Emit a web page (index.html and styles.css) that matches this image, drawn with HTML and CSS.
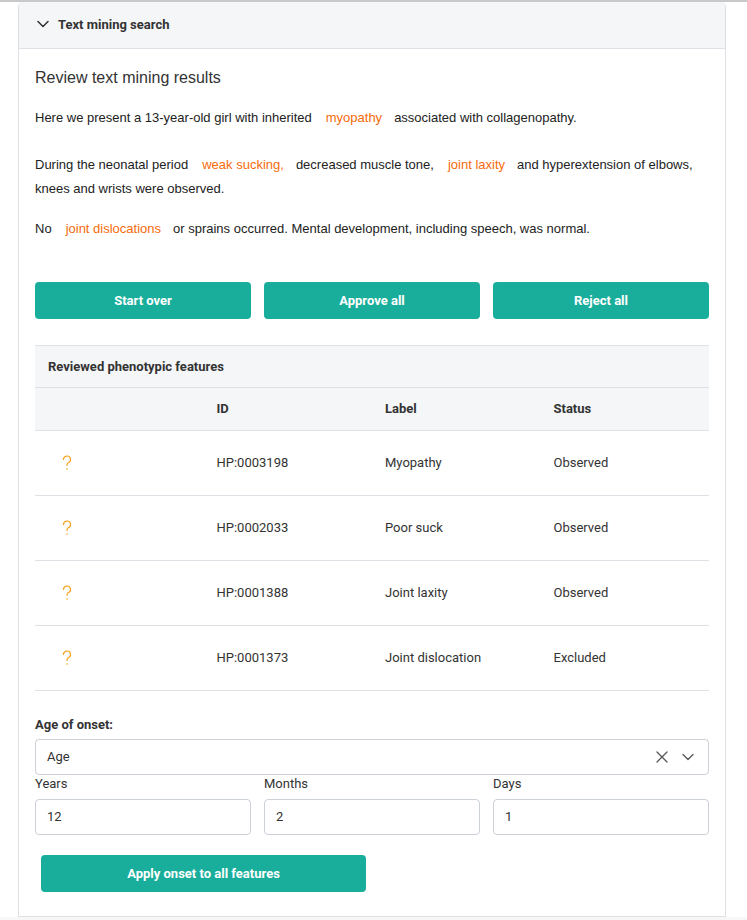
FILE: index.html
```html
<!DOCTYPE html>
<html lang="en">
<head>
<meta charset="utf-8">
<title>Text mining search</title>
<link rel="stylesheet" href="styles.css">
</head>
<body>
<div class="page">
  <section class="card">
    <header class="card-header">
      <svg class="chev" width="12" height="8" viewBox="0 0 12 8"><path d="M1 1.5 L6 6.5 L11 1.5" fill="none" stroke="#333" stroke-width="1.5" stroke-linecap="round" stroke-linejoin="round"/></svg>
      <span class="card-title">Text mining search</span>
    </header>
    <div class="card-body">
      <h2 class="review-title">Review text mining results</h2>
      <p class="mined mined-first"><span>Here we present a 13-year-old girl with inherited</span><span class="hit">myopathy</span><span>associated with collagenopathy.</span></p>
      <p class="mined"><span>During the neonatal period</span><span class="hit">weak sucking,</span><span>decreased muscle tone,</span><span class="hit">joint laxity</span><span>and hyperextension of elbows,</span> <span>knees and wrists were observed.</span></p>
      <p class="mined mined-last"><span>No</span><span class="hit">joint dislocations</span><span>or sprains occurred. Mental development, including speech, was normal.</span></p>

      <div class="actions">
        <button class="btn">Start over</button>
        <button class="btn">Approve all</button>
        <button class="btn">Reject all</button>
      </div>

      <div class="table-wrap">
        <div class="table-caption">Reviewed phenotypic features</div>
        <table class="features">
          <thead>
            <tr><th></th><th>ID</th><th>Label</th><th>Status</th></tr>
          </thead>
          <tbody>
            <tr><td class="q"><svg width="10" height="16" viewBox="0 0 10 16"><path d="M1.5 4.5 A3.5 3.5 0 1 1 6.2 7.8 C5.2 8.4 5 9 5 10.5" fill="none" stroke="#f5a21c" stroke-width="1.2" stroke-linecap="round"/><circle cx="5" cy="14" r="0.8" fill="#f5a21c"/></svg></td><td>HP:0003198</td><td>Myopathy</td><td>Observed</td></tr>
            <tr><td class="q"><svg width="10" height="16" viewBox="0 0 10 16"><path d="M1.5 4.5 A3.5 3.5 0 1 1 6.2 7.8 C5.2 8.4 5 9 5 10.5" fill="none" stroke="#f5a21c" stroke-width="1.2" stroke-linecap="round"/><circle cx="5" cy="14" r="0.8" fill="#f5a21c"/></svg></td><td>HP:0002033</td><td>Poor suck</td><td>Observed</td></tr>
            <tr><td class="q"><svg width="10" height="16" viewBox="0 0 10 16"><path d="M1.5 4.5 A3.5 3.5 0 1 1 6.2 7.8 C5.2 8.4 5 9 5 10.5" fill="none" stroke="#f5a21c" stroke-width="1.2" stroke-linecap="round"/><circle cx="5" cy="14" r="0.8" fill="#f5a21c"/></svg></td><td>HP:0001388</td><td>Joint laxity</td><td>Observed</td></tr>
            <tr><td class="q"><svg width="10" height="16" viewBox="0 0 10 16"><path d="M1.5 4.5 A3.5 3.5 0 1 1 6.2 7.8 C5.2 8.4 5 9 5 10.5" fill="none" stroke="#f5a21c" stroke-width="1.2" stroke-linecap="round"/><circle cx="5" cy="14" r="0.8" fill="#f5a21c"/></svg></td><td>HP:0001373</td><td>Joint dislocation</td><td>Excluded</td></tr>
          </tbody>
        </table>
      </div>

      <div class="onset">
        <div class="onset-label">Age of onset:</div>
        <div class="select">
          <span class="select-value">Age</span>
          <span class="select-icons">
            <svg width="12" height="12" viewBox="0 0 12 12"><path d="M1 1 L11 11 M11 1 L1 11" stroke="#555" stroke-width="1.3" stroke-linecap="round"/></svg>
            <svg width="12" height="8" viewBox="0 0 12 8"><path d="M1 1.5 L6 6.5 L11 1.5" fill="none" stroke="#555" stroke-width="1.3" stroke-linecap="round" stroke-linejoin="round"/></svg>
          </span>
        </div>
        <div class="fields">
          <label class="field"><span class="field-label">Years</span><span class="input">12</span></label>
          <label class="field"><span class="field-label">Months</span><span class="input">2</span></label>
          <label class="field"><span class="field-label">Days</span><span class="input">1</span></label>
        </div>
        <button class="btn btn-apply">Apply onset to all features</button>
      </div>
    </div>
  </section>
  <div class="footer-strip"></div>
</div>
</body>
</html>
```

FILE: styles.css
```css
* { box-sizing: border-box; }
html, body { margin: 0; padding: 0; background: #fff; }
body {
  font-family: Roboto, "Liberation Sans", sans-serif;
  color: #333;
  font-size: 13px;
}
.page {
  border-top: 2px solid #c9c9c9;
  height: 920px;
  overflow: hidden;
}
.card {
  width: 708px;
  margin-left: 18px;
  border: 1px solid #dde1e6;
  border-top: none;
  border-radius: 5px 5px 0 0;
  background: #fff;
  height: 915px;
}
.card-header {
  height: 47px;
  background: #f5f6f7;
  border-bottom: 1px solid #dde1e6;
  border-radius: 5px 5px 0 0;
  display: flex;
  align-items: center;
  padding-left: 18px;
  padding-bottom: 2px;
  gap: 9px;
}
.card-title { font-weight: 700; font-size: 13px; color: #333; }
.card-body { padding: 19px 16px 0 16px; }
.review-title {
  margin: 0;
  font-family: "Liberation Sans", Arial, sans-serif;
  font-weight: 400;
  font-size: 16px;
  line-height: 20px;
  color: #333;
}
.mined {
  font-family: "Liberation Sans", Arial, sans-serif;
  font-size: 13px;
  line-height: 24px;
  margin: 0 0 16px 0;
  color: #222;
}
.mined-first { margin-top: 18px; margin-bottom: 23px; }
.mined-last { margin-bottom: 41px; }
.hit {
  color: #f76b0c;
  margin: 0 12px 0 14px;
}
.actions {
  display: grid;
  grid-template-columns: repeat(3, 1fr);
  gap: 13px;
}
.btn {
  height: 37px;
  background: #19ae9b;
  color: #fff;
  border: none;
  border-radius: 4px;
  font-family: Roboto, "Liberation Sans", sans-serif;
  font-weight: 700;
  font-size: 13px;
}
.table-wrap { margin-top: 26px; }
.table-caption {
  background: #f5f6f7;
  border-top: 1px solid #dde1e6;
  border-bottom: 1px solid #dde1e6;
  height: 43px;
  display: flex;
  align-items: center;
  padding-left: 13px;
  font-weight: 700;
}
.features {
  width: 100%;
  border-collapse: collapse;
  table-layout: fixed;
}
.features th {
  background: #f5f6f7;
  height: 42px;
  text-align: left;
  font-weight: 700;
  padding: 0 13px;
  border-bottom: 1px solid #dde1e6;
}
.features td {
  height: 65px;
  padding: 0 13px;
  border-bottom: 1px solid #dde1e6;
  color: #333;
}
.features td.q { padding-left: 27px; }
.features td.q svg { display: block; }
.onset { padding-top: 26px; }
.onset-label { font-weight: 700; line-height: 16px; margin-bottom: 6px; }
.select {
  height: 36px;
  border: 1px solid #ccd1d8;
  border-radius: 4px;
  display: flex;
  align-items: center;
  justify-content: space-between;
  padding: 0 14px 0 11px;
}
.select-icons { display: flex; align-items: center; gap: 14px; }
.fields {
  display: grid;
  grid-template-columns: repeat(3, 1fr);
  gap: 13px;
}
.field { display: flex; flex-direction: column; }
.field-label { line-height: 16px; height: 24px; padding-top: 1px; }
.input {
  height: 36px;
  border: 1px solid #ccd1d8;
  border-radius: 4px;
  display: flex;
  align-items: center;
  padding-left: 11px;
}
.btn-apply {
  margin-top: 20px;
  margin-left: 6px;
  width: 325px;
  height: 37px;
}
.footer-strip { height: 4px; background: #f7f7f7; }
```
